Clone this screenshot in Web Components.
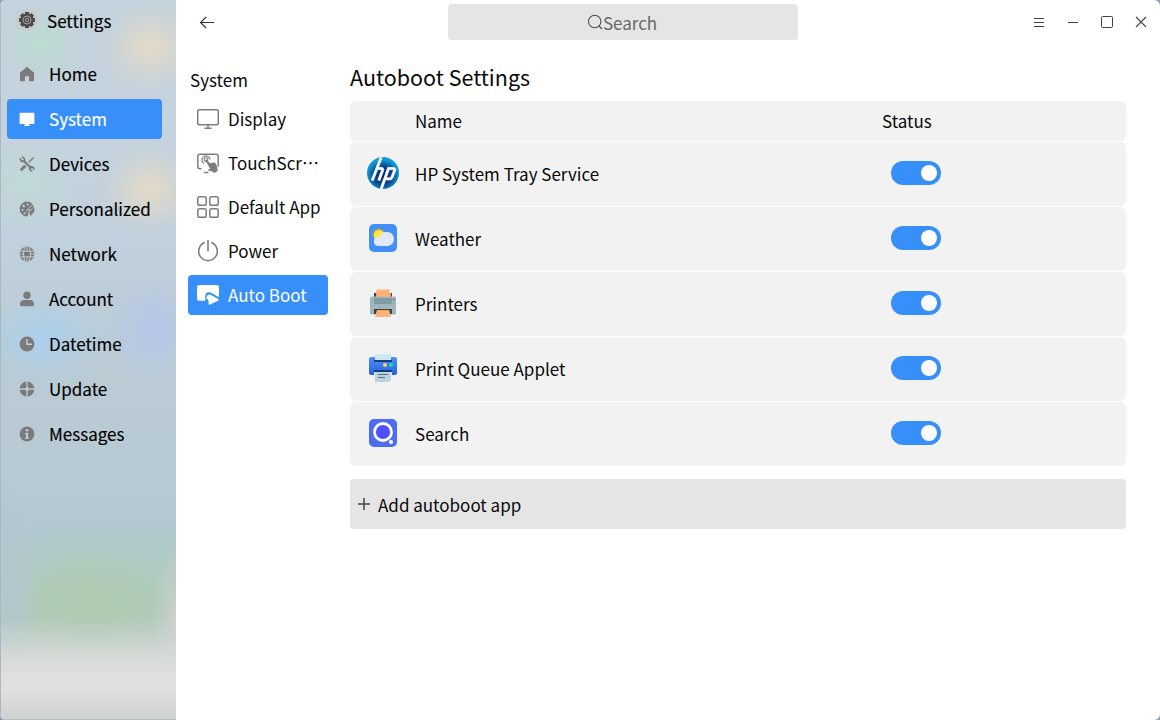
<!DOCTYPE html>
<html lang="en">
<head>
<meta charset="utf-8">
<title>Settings</title>
<style>
html,body{margin:0;height:100%;background:#8ba0b4}
body{overflow:hidden;font-family:"Noto Sans CJK SC","Noto Sans",sans-serif;font-size:17px;color:#0a0a0a}
</style>
</head>
<body>
<settings-window></settings-window>
<script>
const ICONS = {
  gear:'<circle cx="16" cy="16" r="16" fill="#c9cbcc"/><g fill="#4a4a4c"><circle cx="16" cy="16" r="9.600"/><path d="M13 4.500h6v23h-6zM4.500 13v6h23v-6zM9.700 5.700 5.700 9.700 22.300 26.300l4-4zM22.300 5.700l4 4L9.700 26.300l-4-4z"/></g><circle cx="16" cy="16" r="5.800" fill="none" stroke="#a3a3a3" stroke-width="1.400"/><circle cx="16" cy="16" r="2.500" fill="#4a4a4c" stroke="#a3a3a3" stroke-width="1.400"/>',
  home:'<path fill="#7b7b7b" d="M8 .7 .8 6.800Q.4 7.400 1 7.600V14.500q0 .8.8.8H5.900V11q0-.8.800-.8h2.600q.8 0 .8.8v4.300h4.100q.8 0 .8-.8V7.600q.6-.2.200-.8z"/>',
  system:'<path fill="#fff" d="M1.200 1.800h13.600q.6 0 .6.600v10q0 .600-.6.600H10v1h1v1H5v-1h1v-1H1.200q-.6 0-.6-.6v-10q0-.6.600-.6z"/>',
  devices:'<g fill="none" stroke="#7b7b7b" stroke-width="2.200"><path d="M4.500 4.500l8 8"/><path d="M14.700 1.500 9.800 6.200" stroke-width="1.300"/><path d="M6.500 9.500 1.800 14.200" stroke-width="3"/><path d="M1.300 2.200A2.700 2.700 0 0 0 4.800 5.300 2.600 2.600 0 0 0 2.800 1" stroke-width="1.700"/><path d="M14.700 13.800A2.700 2.700 0 0 0 11.200 10.700 2.600 2.600 0 0 0 13.200 15" stroke-width="1.700"/></g>',
  palette:'<path fill="#7b7b7b" d="M8 .6a7.400 7.400 0 1 0 0 14.800Q9.500 15 9 13.800 8.600 12.500 10 12h2.500Q15.500 11.500 15.400 8A7.400 7.400 0 0 0 8 .6z"/><g fill="#c5d1d8"><circle cx="4.700" cy="5" r="1.200"/><circle cx="8.700" cy="3.500" r="1.100"/><circle cx="3.500" cy="9" r="1.100"/><circle cx="5.500" cy="12.300" r="1"/></g><path d="M14.800 4 8 11.200" stroke="#c5d1d8" stroke-width="3.200"/><path d="M14.300 4.500 10.500 8.500M9.800 9.200 7.500 12" stroke="#7b7b7b" stroke-width="1.900"/><path d="M14.800 9.500 11 14" stroke="#7b7b7b" stroke-width="2"/>',
  network:'<circle cx="8" cy="8" r="7.400" fill="#7b7b7b"/><g fill="none" stroke="#c0cdd7" stroke-width="1"><path d="M5.500.7Q3.500 8 5.500 15.300M10.500.7Q12.500 8 10.500 15.300M.5 8H5M11 8h4.500M8 .5V5M8 11v4.500M1.300 5.200h13.400M1.300 10.800h13.400"/></g>',
  account:'<g fill="#7b7b7b"><circle cx="8" cy="4.200" r="3.700"/><path d="M1 13.500Q1 9 5 9h6q4 0 4 4.500 0 1.700-1.500 1.700h-11Q1 15.200 1 13.500z"/></g>',
  clock:'<circle cx="8" cy="8" r="7.400" fill="#7b7b7b"/><path d="M8 3v5.300h5" fill="none" stroke="#c0d0de" stroke-width="1.400"/>',
  update:'<circle cx="8" cy="8" r="7.400" fill="#7b7b7b"/><path d="M8 0v4.800M8 11.200V16M0 8h4.800M11.200 8H16" stroke="#becbd2" stroke-width="1.300"/><path d="M8 4.500Q8.500 7.500 11.500 8 8.500 8.500 8 11.500 7.500 8.500 4.500 8 7.500 7.500 8 4.500z" fill="#becbd2" stroke="#becbd2" stroke-width=".5"/>',
  info:'<circle cx="8" cy="8" r="7.400" fill="#7b7b7b"/><g fill="#becbd2"><circle cx="8" cy="4.200" r="1.300"/><path d="M6 6.700h3v4.800h1v1.300H6v-1.300h1V8H6z"/></g>',
  display:'<rect x="1.700" y="2.700" width="20.600" height="15" rx="1.500" fill="none" stroke="#7d7d7d" stroke-width="1.500"/><path d="M12 17.500v3.500M8.500 21.200h7" stroke="#7d7d7d" stroke-width="1.500"/>',
  touch:'<path d="M5.500 17.700H4Q1.800 17.700 1.800 15.500V5.500Q1.800 3.300 4 3.300h16q2.200 0 2.200 2.200V15.500M8 21.500h4.500" fill="none" stroke="#7d7d7d" stroke-width="1.500"/><path d="M7.800 12.500A4.100 4.100 0 1 1 14 8.300" fill="none" stroke="#7d7d7d" stroke-width="1.200"/><circle cx="10" cy="8.600" r="1.900" fill="none" stroke="#7d7d7d" stroke-width="1.100"/><path fill="#7d7d7d" d="M9 9q1.300-1.300 2.500.3l2.300 3 3.700-.8q1.300-.2 2 .8l1.500 3q.6 1 .2 2l.7 2.500-3.800 2.500-1-1.500-4.300-1.100q-1-.6-.4-1.500l2-.2z"/>',
  apps:'<g fill="none" stroke="#7d7d7d" stroke-width="1.500"><rect x="1.800" y="1.800" width="8.400" height="8.400" rx="1.800"/><rect x="13.800" y="1.800" width="8.400" height="8.400" rx="1.800"/><rect x="1.800" y="13.800" width="8.400" height="8.400" rx="1.800"/><rect x="13.800" y="13.800" width="8.400" height="8.400" rx="1.800"/></g>',
  power:'<path d="M8.700 3.600a9.300 9.300 0 1 0 6.600 0M12 1v11.500" fill="none" stroke="#7d7d7d" stroke-width="1.600"/>',
  autoboot:'<rect x="1" y="2" width="22" height="15.800" rx="2.200" fill="#fff"/><path d="M9.200 18v-4.500Q9.500 8.200 14.500 9.600L23.500 14.500V18z" fill="#3790fa"/><path fill="#fff" d="M10.400 15.500v-1.200q.6-3 3.600-2.700l7.800 4.200q1.500.9.200 1.900L14 21.500q-1.400.7-1.400-.7v-2.500q-.5-2-2.200-2.800z"/>',
  hp:'<defs><radialGradient id="g" cx=".5" cy=".58" r=".5"><stop offset="0" stop-color="#03205f"/><stop offset=".6" stop-color="#064a92"/><stop offset="1" stop-color="#109bd8"/></radialGradient><clipPath id="c"><circle cx="16" cy="16" r="16"/></clipPath></defs><circle cx="16" cy="16" r="16" fill="url(#g)"/><g clip-path="url(#c)" fill="none"><g stroke="#9fb0c6" stroke-width="3.200"><path d="M14.200.3 5.200 23.500M9.800 11.500h4.500q1.900 0 1.200 2L11.800 23.500"/><path d="M13.800 33 21.500 11.500h4.800q2 0 1.200 2.200l-2.400 6.300q-.7 1.800-2.400 1.800H18.600"/></g><g stroke="#fafafa" stroke-width="2.300"><path d="M14.200.3 5.200 23.500M9.800 11.500h4.500q1.900 0 1.200 2L11.800 23.500"/><path d="M13.800 33 21.500 11.500h4.800q2 0 1.200 2.200l-2.400 6.300q-.7 1.800-2.400 1.800H18.600"/></g></g>',
  weather:'<rect width="28" height="28" rx="5" fill="#438ff5"/><circle cx="9.500" cy="10.500" r="6.300" fill="#9a9c78"/><circle cx="10" cy="11" r="5.200" fill="#ffe53e"/><path fill="#dfe9fb" d="M9 22a4.700 4.700 0 0 1-.7-9.200q1.200.2 2 .9Q12 8 17 8a7 7 0 0 1 2 14z"/>',
  printer:'<path fill="#36454e" d="M5 4h18v5H5z"/><path fill="#ffb375" d="M8 .5h12.500V7H22v1H7V2z"/><path fill="#ff9d55" d="M7 4h1.500v4H7zM20 4h2v4h-2z"/><rect x="1" y="7.500" width="26" height="18" rx="1.500" fill="#a0b5be"/><path fill="#819ba5" d="M5 9h18v6H5z"/><path fill="#36454e" d="M5 20h18v5H5z"/><path fill="#ffb375" d="M8 21h12l2 7H6z"/><path fill="#ff9d55" d="M8 21h12v1H8z"/><path fill="#e95670" d="M24 9.500h2v2h-2z"/><path fill="#35eaa5" d="M24 12.500h2v2h-2z"/>',
  queue:'<defs><linearGradient id="g" x2="0" y2="1"><stop stop-color="#4e91f5"/><stop offset="1" stop-color="#2560de"/></linearGradient></defs><rect y="3" width="28" height="18" rx="2" fill="url(#g)"/><path fill="#143c80" d="M5 6h18v2H5zM5 16h18v2H5z"/><path fill="#cbe9f5" d="M6 0h16v6H6z"/><path fill="#f2f2f2" d="M5 18h18v3H5z"/><path fill="#b9d4e0" d="M6 18h16v7q0 3-3 3H6z"/><circle cx="16" cy="11" r="2" fill="#ffd35a"/><circle cx="22" cy="11" r="2" fill="#1bd8a4"/><path d="M9 20.500h10M9 23.500h7" stroke="#50707e"/>',
  search:'<rect width="28" height="28" rx="5" fill="#4d6cef"/><circle cx="14" cy="13" r="8.500" fill="#4e50ff" stroke="#fff" stroke-width="2.800"/><circle cx="22" cy="23" r="2.100" fill="#fff"/>',
  back:'<path d="M1.200 8.500H15M7.200 3 1.500 8.500l5.700 5.500" fill="none" stroke="#333" stroke-width="1.100"/>',
  find:'<g fill="none" stroke="#4c5150" stroke-width="1.100"><circle cx="7.700" cy="7.500" r="6.200"/><path d="M12 12l3 3"/></g>',
  menu:'<path d="M3 4.500h10M3 8.500h10M3 12.500h10" stroke="#444"/>',
  min:'<path d="M3 8.500h10" stroke="#444"/>',
  max:'<rect x="2.500" y="2.500" width="11" height="11" rx="1" fill="none" stroke="#444"/>',
  close:'<path d="M3 3l10 10M13 3 3 13" fill="none" stroke="#444" stroke-width="1.100"/>',
  plus:'<path d="M8 2v12M2 8h12" stroke="#444" stroke-width="1.500"/>'
};
const BOX = {gear:32,hp:32,display:24,touch:24,apps:24,power:24,autoboot:24,weather:28,printer:28,queue:28,search:28};

class Base extends HTMLElement {
  connectedCallback(){
    if (this.shadowRoot) return;
    this.attachShadow({mode:'open'}).innerHTML = this.view();
  }
}
customElements.define('ui-icon', class extends Base {
  view(){
    const n = this.getAttribute('name'), b = BOX[n] || 16, s = this.getAttribute('size') || b;
    return `<style>:host{display:block;flex:none;width:${s}px;height:${s}px}svg{display:block;width:100%;height:100%}</style>
    <svg viewBox="0 0 ${b} ${b}">${ICONS[n]}</svg>`;
  }
});
customElements.define('side-item', class extends Base {
  view(){ return `<style>
    :host{display:flex;align-items:center;box-sizing:border-box;height:40px;padding-left:12px;gap:14px;border-radius:4px;color:#000;-webkit-text-stroke:.15px currentColor}
    :host([active]){background:#3790fa;color:#fff}
    span{line-height:24px;margin-top:-1px}
    </style><ui-icon name="${this.getAttribute('icon')}"></ui-icon><span><slot></slot></span>`; }
});
customElements.define('side-bar', class extends Base {
  view(){ return `<style>
    :host{display:block;box-sizing:border-box;width:176px;height:720px;border-left:1px solid #aab8c1;border-bottom:1px solid #b9bdbd;
     background:
      radial-gradient(ellipse 54px 48px at 149px 47px,#e4dac8 0,#e4dac8c0 25%,#e4dac870 50%,#e4dac820 78%,#e4dac800),
      radial-gradient(ellipse 54px 48px at 149px 190px,#e4dac8 0,#e4dac8c0 25%,#e4dac870 50%,#e4dac820 78%,#e4dac800),
      radial-gradient(ellipse 50px 42px at 40px 44px,#bbdccf 0,#bbdccf80 40%,#bbdccf20 75%,#bbdccf00),
      radial-gradient(ellipse 60px 48px at 24px 186px,#bfdbd5b0 0,#bfdbd560 45%,#bfdbd500),
      radial-gradient(ellipse 70px 50px at 42px 338px,#aacfec 0,#aacfec90 40%,#aacfec25 75%,#aacfec00),
      radial-gradient(ellipse 60px 58px at 153px 330px,#b6c6e8 0,#b6c6e890 45%,#b6c6e825 75%,#b6c6e800),
      linear-gradient(#d3d9d500 618px,#d3d9d590 640px,#dadcd9e0 656px,#dfdfdd 675px,#e0e0de 690px,#ced2d2 719px),
      radial-gradient(ellipse 42px 110px at 0 585px,#b2c6d0 0,#b2c6d0a0 45%,#b2c6d000),
      radial-gradient(ellipse 26px 75px at 176px 620px,#cbd1cc 0,#cbd1cc90 45%,#cbd1cc00),
      radial-gradient(ellipse 80px 60px at 92px 606px,#b0cbb0 0,#b0cbb0b0 40%,#b0cbb000),
      linear-gradient(#c3d2dc 0,#c5d3de 130px,#c0d0dc 240px,#bacbd4 370px,#b7c9d4 490px,#b2c8d0 530px,#b1cac4 562px,#b0cabb 600px,#b1cabd 630px)}
    header{display:flex;align-items:center;height:42px;padding-left:15px;gap:9px;color:#000;-webkit-text-stroke:.15px currentColor}
    header span{line-height:24px;margin-top:-1px}
    nav{display:flex;flex-direction:column;gap:5px;padding:12px 14px 0 6px}
    header ui-icon{margin-top:-2px}
    </style><header><ui-icon name="gear" size="22"></ui-icon><span>Settings</span></header><nav><slot></slot></nav>`; }
});
customElements.define('sub-item', class extends Base {
  view(){ return `<style>
    :host{display:flex;align-items:center;box-sizing:border-box;height:40px;padding-left:8px;gap:8px;border-radius:4px}
    :host([active]){background:#3790fa;color:#fff}
    span{line-height:24px;margin-top:-1px;white-space:nowrap}
    </style><ui-icon name="${this.getAttribute('icon')}"></ui-icon><span><slot></slot></span>`; }
});
customElements.define('sub-nav', class extends Base {
  view(){ return `<style>
    :host{display:block;width:140px;padding:24px 0 0 12px}
    h2{margin:0 0 7px 2px;font-size:17px;font-weight:400;line-height:24px}
    nav{display:flex;flex-direction:column;gap:4px}
    </style><h2>System</h2><nav><slot></slot></nav>`; }
});
customElements.define('title-bar', class extends Base {
  view(){ return `<style>
    :host{display:grid;grid-template-columns:272px 350px 1fr;height:44px}
    .back{padding:14px 0 0 23px}
    .search{display:flex;align-items:center;justify-content:center;box-sizing:border-box;height:36px;margin-top:4px;padding-right:2px;border-radius:4px;background:#e5e5e5;color:#626a68}
    .search span{line-height:24px;padding-top:2px}.search ui-icon{margin-top:-1px}
    .buttons{display:flex;justify-content:flex-end;gap:18px;padding:14px 11px 0 0}
    </style><div class="back"><ui-icon name="back"></ui-icon></div>
    <div class="search"><ui-icon name="find"></ui-icon><span>Search</span></div>
    <div class="buttons"><ui-icon name="menu"></ui-icon><ui-icon name="min"></ui-icon><ui-icon name="max"></ui-icon><ui-icon name="close"></ui-icon></div>`; }
});
customElements.define('toggle-switch', class extends Base {
  view(){ return `<style>
    :host{display:flex;box-sizing:border-box;width:50px;height:24px;padding:4px;border-radius:12px;background:#3790fa;justify-content:flex-end}
    i{width:16px;height:16px;border-radius:50%;background:#fff}
    </style><i></i>`; }
});
customElements.define('app-row', class extends Base {
  view(){ return `<style>
    :host{display:grid;grid-template-columns:65px 476px 1fr;align-items:center;height:64px;border-radius:6px;background:#f2f2f2}
    .ic{display:flex;justify-content:center;margin-top:-2px}
    span{line-height:24px;margin-top:-1px}
    toggle-switch{margin-top:-2px}
    </style><div class="ic"><ui-icon name="${this.getAttribute('icon')}"></ui-icon></div><span><slot></slot></span><toggle-switch></toggle-switch>`; }
});
customElements.define('app-table', class extends Base {
  view(){ return `<style>
    :host{display:flex;flex-direction:column;gap:1px}
    header{display:grid;grid-template-columns:65px 467px 1fr;align-items:center;height:40px;border-radius:6px;background:#f2f2f2}
    span{line-height:24px;margin-top:-1px}
    </style><header><i></i><span>Name</span><span>Status</span></header><slot></slot>`; }
});
customElements.define('add-button', class extends Base {
  view(){ return `<style>
    :host{display:flex;align-items:center;height:50px;margin-top:13px;padding-left:6px;gap:6px;border-radius:4px;background:#e5e5e5}
    span{line-height:24px;padding-top:1px}
    </style><ui-icon name="plus"></ui-icon><span><slot></slot></span>`; }
});
customElements.define('settings-window', class extends Base {
  view(){ return `<style>
    :host{display:flex;width:1160px;height:720px;overflow:hidden;border-radius:6px;background:#fff}
    .main{flex:1}
    .body{display:flex}
    section{flex:1;padding:19px 34px 0 22px}
    h1{margin:0 0 10px;font-size:21.5px;line-height:28px;font-weight:400}
    </style>
    <side-bar>
      <side-item icon="home">Home</side-item>
      <side-item icon="system" active>System</side-item>
      <side-item icon="devices">Devices</side-item>
      <side-item icon="palette">Personalized</side-item>
      <side-item icon="network">Network</side-item>
      <side-item icon="account">Account</side-item>
      <side-item icon="clock">Datetime</side-item>
      <side-item icon="update">Update</side-item>
      <side-item icon="info">Messages</side-item>
    </side-bar>
    <div class="main"><title-bar></title-bar>
      <div class="body">
        <sub-nav>
          <sub-item icon="display">Display</sub-item>
          <sub-item icon="touch" lang="zh-CN">TouchScr…</sub-item>
          <sub-item icon="apps">Default App</sub-item>
          <sub-item icon="power">Power</sub-item>
          <sub-item icon="autoboot" active>Auto Boot</sub-item>
        </sub-nav>
        <section><h1>Autoboot Settings</h1>
          <app-table>
            <app-row icon="hp">HP System Tray Service</app-row>
            <app-row icon="weather">Weather</app-row>
            <app-row icon="printer">Printers</app-row>
            <app-row icon="queue">Print Queue Applet</app-row>
            <app-row icon="search">Search</app-row>
          </app-table>
          <add-button>Add autoboot app</add-button>
        </section>
      </div>
    </div>`; }
});
</script>
</body>
</html>
